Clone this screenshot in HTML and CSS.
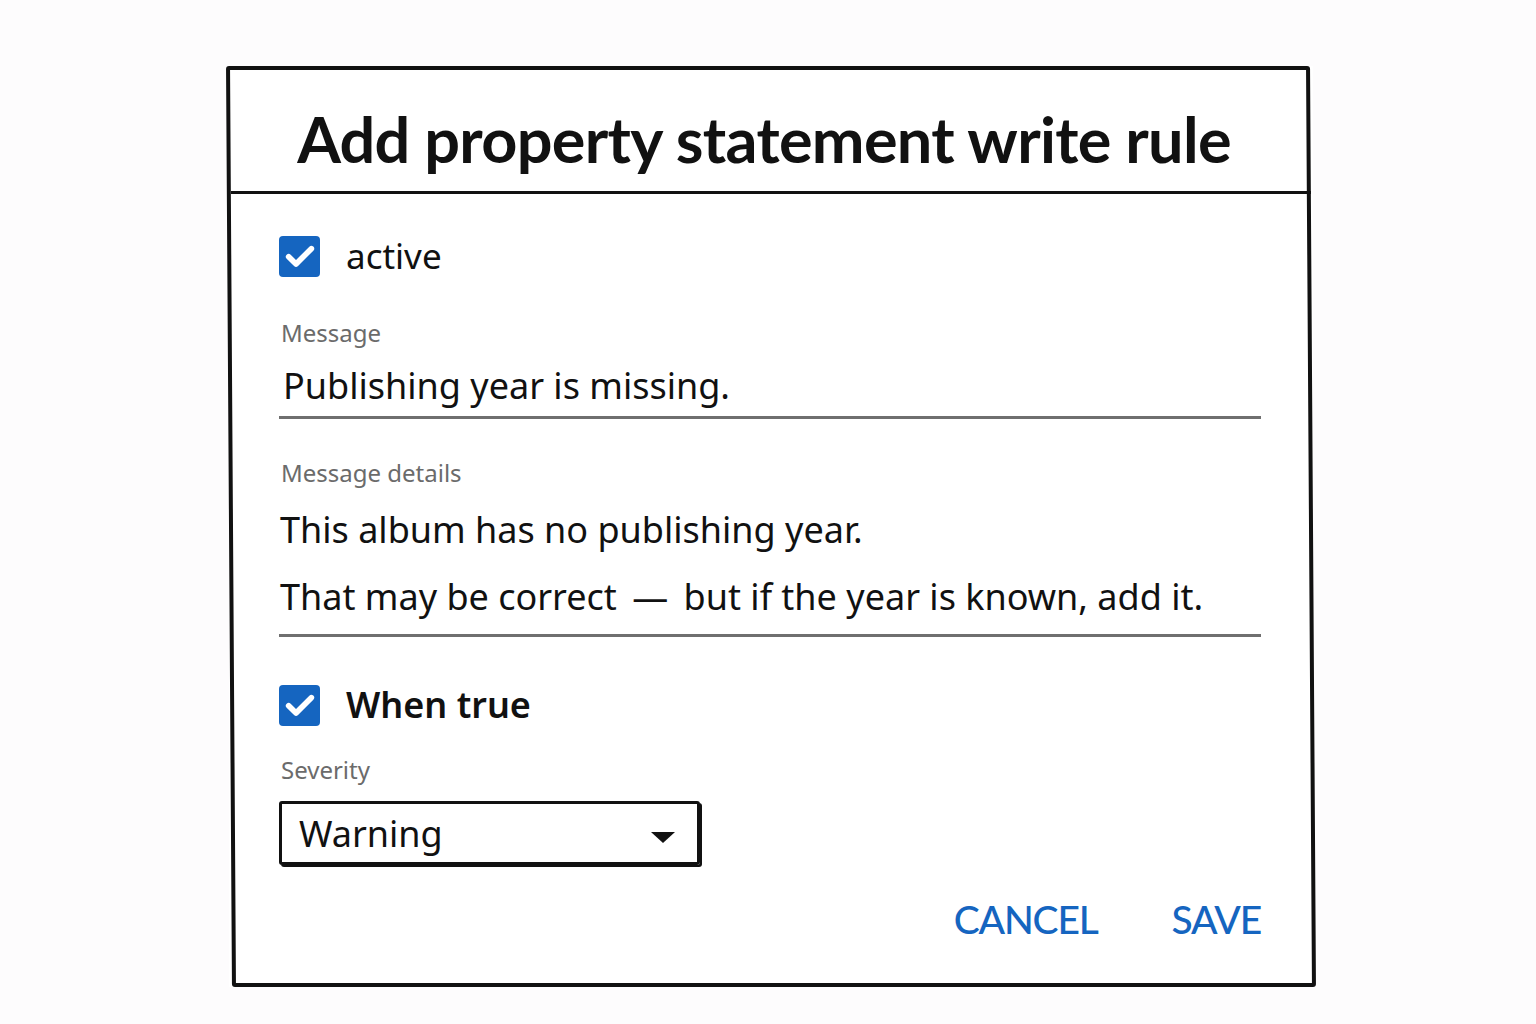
FILE: index.html
```html
<!DOCTYPE html>
<html lang="en">
<head>
    <meta charset="UTF-8">
    <title>Add property statement write rule</title>
    <link rel="stylesheet" href="styles.css">
</head>
<body>
    <div class="dialog">
        <h1 class="dialog-title">Add property statement write rule</h1>

        <div class="dialog-body">
            <label class="check-row">
                <span class="checkbox">
                    <svg viewBox="0 0 24 24" width="34" height="34"><path d="M4 12.5l5.2 5.2L20 6.8" fill="none" stroke="#fff" stroke-width="4" stroke-linecap="round" stroke-linejoin="round"/></svg>
                </span>
                <span class="check-label">active</span>
            </label>

            <div class="field">
                <div class="field-label">Message</div>
                <div class="field-input">
                    <div class="field-line">Publishing year is missing.</div>
                </div>
            </div>

            <div class="field details">
                <div class="field-label">Message details</div>
                <div class="field-input multi">
                    <div class="field-line">This album has no publishing year.</div>
                    <div class="field-line">That may be correct <span class="dash">—</span> but if the year is known, add it.</div>
                </div>
            </div>

            <label class="check-row second">
                <span class="checkbox">
                    <svg viewBox="0 0 24 24" width="34" height="34"><path d="M4 12.5l5.2 5.2L20 6.8" fill="none" stroke="#fff" stroke-width="4" stroke-linecap="round" stroke-linejoin="round"/></svg>
                </span>
                <span class="check-label strong">When true</span>
            </label>

            <div class="field severity">
                <div class="field-label">Severity</div>
                <div class="select">
                    <span>Warning</span>
                    <span class="caret"></span>
                </div>
            </div>

            <div class="actions">
                <button class="text-btn">CANCEL</button>
                <button class="text-btn">SAVE</button>
            </div>
        </div>
    </div>
</body>
</html>
```

FILE: styles.css
```css
:root {
    --ink: #111111;
    --muted: #6b6b6b;
    --line: #6f6f6f;
    --primary: #1565c0;
    --bg: #fdfcfd;
}

body {
    margin: 0;
    background-color: var(--bg);
    font-family: 'Lato', 'Noto Sans', sans-serif;
    color: var(--ink);
    padding-top: 66px;
}

.dialog {
    position: relative;
    width: 1076px;
    margin: 0 auto;
    padding: 4px;
    background-color: #ffffff;
    transform: translateX(3px);
}

/* hand-drawn frame, leaning a little to the right */
.dialog::before {
    content: "";
    position: absolute;
    inset: 0;
    border: 4px solid var(--ink);
    border-radius: 3px;
    transform: skewX(0.37deg);
    pointer-events: none;
}

.dialog-title {
    margin: 0 -2px;
    height: 124px;
    box-sizing: border-box;
    padding-top: 34px;
    padding-right: 14px;
    border-bottom: 3px solid var(--ink);
    text-align: center;
    font-size: 63px;
    font-weight: 700;
    line-height: 70px;
    letter-spacing: -0.7px;
}

.dialog-body {
    padding: 41px 48px 41px 46px;
}

/* Checkbox rows */
.check-row {
    display: flex;
    align-items: center;
    gap: 26px;
    height: 42px;
}

.check-row.second {
    margin-top: 47px;
}

.checkbox {
    width: 41px;
    height: 41px;
    border-radius: 4px;
    background-color: var(--primary);
    display: flex;
    align-items: center;
    justify-content: center;
}

.check-label {
    font-family: 'Noto Sans', sans-serif;
    font-size: 35px;
    line-height: 42px;
}

.check-label.strong {
    font-weight: 600;
    font-size: 36px;
}

/* Text fields */
.field {
    margin-top: 40px;
}

.check-row + .field {
    margin-top: 40px;
}

.field.details {
    margin-top: 38px;
}

.check-row + .field.severity {
    margin-top: 28px;
}

.field-label {
    font-family: 'Noto Sans', sans-serif;
    font-size: 24px;
    line-height: 32px;
    color: var(--muted);
    padding-left: 2px;
}

.field-input {
    margin-top: 16px;
    padding: 0 0 9px 4px;
    border-bottom: 3px solid var(--line);
}

.field-input.multi {
    padding-left: 1px;
    padding-bottom: 16px;
    margin-top: 20px;
}

.field-line {
    font-family: 'Noto Sans', sans-serif;
    font-size: 36px;
    line-height: 42px;
}

.field-input.multi .field-line + .field-line {
    margin-top: 25px;
}

.dash {
    padding: 0 6px;
}

/* Severity select */
.select {
    margin-top: 15px;
    width: 376px;
    height: 58px;
    border: 3px solid var(--ink);
    border-radius: 3px;
    box-shadow: 2px 2px 0 var(--ink);
    display: flex;
    align-items: center;
    justify-content: space-between;
    padding: 0 22px 0 17px;
    font-family: 'Noto Sans', sans-serif;
    font-size: 36px;
}

.caret {
    width: 0;
    height: 0;
    border-left: 12px solid transparent;
    border-right: 12px solid transparent;
    border-top: 11px solid var(--ink);
    margin-top: 8px;
}

/* Footer buttons */
.actions {
    display: flex;
    justify-content: flex-end;
    gap: 74px;
    margin-top: 31px;
}

.text-btn {
    border: none;
    background: none;
    padding: 0;
    font-family: 'Lato', 'Noto Sans', sans-serif;
    font-size: 39px;
    font-weight: 500;
    color: var(--primary);
    cursor: pointer;
    letter-spacing: -1.2px;
}
```
